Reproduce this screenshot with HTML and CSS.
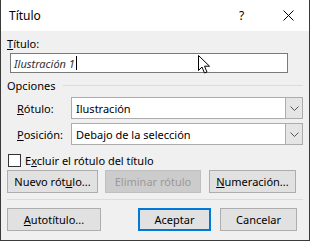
FILE: index.html
```html
<!DOCTYPE html>
<html lang="es">
<head>
    <meta charset="UTF-8">
    <title>Título</title>
    <link rel="stylesheet" href="styles.css">
</head>
<body>
    <div class="dialog">
        <div class="titlebar">
            <span class="title">Título</span>
            <span class="help">?</span>
            <svg class="close" width="11" height="11" viewBox="0 0 11 11">
                <path d="M0.5 0.5 L10.5 10.5 M10.5 0.5 L0.5 10.5" stroke="#000" stroke-width="1" fill="none"/>
            </svg>
        </div>

        <div class="content">
            <div class="label-top"><u>T</u>ítulo:</div>
            <div class="textbox"><span class="value">Ilustración 1</span><span class="caret"></span></div>

            <div class="group-head">
                <span>Opciones</span>
                <span class="group-line"></span>
            </div>

            <div class="field-row">
                <span class="field-label"><u>R</u>ótulo:</span>
                <div class="select">
                    <span class="select-text">Ilustración</span>
                    <span class="select-btn"><svg width="9" height="5" viewBox="0 0 9 5"><path d="M0.5 0.5 L4.5 4.5 L8.5 0.5" stroke="#555" fill="none"/></svg></span>
                </div>
            </div>
            <div class="field-row">
                <span class="field-label"><u>P</u>osición:</span>
                <div class="select">
                    <span class="select-text">Debajo de la selección</span>
                    <span class="select-btn"><svg width="9" height="5" viewBox="0 0 9 5"><path d="M0.5 0.5 L4.5 4.5 L8.5 0.5" stroke="#555" fill="none"/></svg></span>
                </div>
            </div>

            <div class="check-row">
                <span class="checkbox"></span>
                <span>E<u>x</u>cluir el rótulo del título</span>
            </div>

            <div class="btn-row">
                <button class="btn btn-new">Nuevo rót<u>u</u>lo...</button>
                <button class="btn btn-del" disabled>Eliminar rótulo</button>
                <button class="btn btn-num"><u>N</u>umeración...</button>
            </div>

            <div class="separator"></div>

            <div class="btn-row bottom">
                <button class="btn btn-auto"><u>A</u>utotítulo...</button>
                <button class="btn btn-ok">Aceptar</button>
                <button class="btn btn-cancel">Cancelar</button>
            </div>
        </div>

        <svg class="pointer" width="14" height="20" viewBox="0 0 14 20">
            <path d="M0.5 0.5 L0.5 15.5 L4 12 L6.5 18 L9 17 L6.5 11.2 L11.5 11.2 Z" fill="#fff" stroke="#000" stroke-width="1" stroke-linejoin="miter"/>
        </svg>
    </div>
</body>
</html>
```

FILE: styles.css
```css
body {
    margin: 0;
    font-family: "Segoe UI", "Noto Sans", sans-serif;
    font-size: 11px;
    color: #000;
}
.dialog {
    position: relative;
    width: 310px;
    height: 241px;
    box-sizing: border-box;
    border: 1px solid #3a3a3a;
    border-top: none;
    background-color: #f0f0f0;
    overflow: hidden;
}
.titlebar {
    height: 31px;
    background-color: #fff;
    display: flex;
    align-items: center;
    padding-left: 8px;
}
.title {
    flex: 1;
    font-size: 12px;
    margin-top: -1px;
}
.help {
    width: 10px;
    margin-right: 34px;
    font-size: 12px;
}
.close {
    margin-right: 15px;
}
.content {
    padding: 5px 6px 0 6px;
}
.label-top {
    line-height: 16px;
    height: 16px;
}
.textbox {
    margin: 1px 15px 0 3px;
    height: 18px;
    border: 1px solid #7a7a7a;
    background-color: #fff;
    display: flex;
    align-items: center;
    padding-left: 3px;
}
.value {
    font-style: italic;
    color: #333;
}
.caret {
    width: 1px;
    height: 14px;
    background-color: #000;
    margin-left: 1px;
}
.group-head {
    display: flex;
    align-items: center;
    margin-top: 4px;
    height: 16px;
}
.group-line {
    flex: 1;
    height: 1px;
    background-color: #dcdcdc;
    margin-left: 8px;
    margin-top: 1px;
}
.field-row {
    display: flex;
    align-items: center;
    margin-top: 4px;
    padding-left: 10px;
}
.field-row + .field-row {
    margin-top: 4px;
}
.field-label {
    width: 54px;
}
.select {
    flex: 1;
    height: 20px;
    border: 1px solid #acacac;
    background-color: #fff;
    display: flex;
    align-items: center;
}
.select-text {
    flex: 1;
    padding-left: 4px;
}
.select-btn {
    width: 17px;
    height: 20px;
    box-sizing: border-box;
    border-left: 1px solid #acacac;
    background-color: #e5e5e5;
    display: flex;
    align-items: center;
    justify-content: center;
}
.check-row {
    display: flex;
    align-items: center;
    margin-top: 8px;
    height: 15px;
}
.checkbox {
    width: 11px;
    height: 11px;
    border: 1px solid #333;
    background-color: #fff;
    margin-right: 4px;
    margin-left: 1px;
}
.btn-row {
    display: flex;
    margin-top: 2px;
    margin-right: 7px;
}
.btn {
    height: 23px;
    box-sizing: border-box;
    border: 1px solid #adadad;
    background-color: #e1e1e1;
    font-family: inherit;
    font-size: 11px;
    color: #000;
    padding: 0;
}
.btn-new {
    width: 93px;
}
.btn-del {
    width: 98px;
    margin-left: 7px;
    background-color: #cccccc;
    border-color: #bfbfbf;
    color: #9a9a9a;
}
.btn-num {
    width: 89px;
    margin-left: 8px;
}
.separator {
    height: 1px;
    background-color: #dcdcdc;
    margin-top: 6px;
}
.btn-row.bottom {
    margin-top: 8px;
    margin-right: 6px;
}
.btn-auto {
    width: 94px;
}
.btn-ok {
    width: 73px;
    margin-left: auto;
    border: 2px solid #0078d7;
}
.btn-cancel {
    width: 77px;
    margin-left: 9px;
}
.pointer {
    position: absolute;
    left: 197px;
    top: 55px;
}
```
